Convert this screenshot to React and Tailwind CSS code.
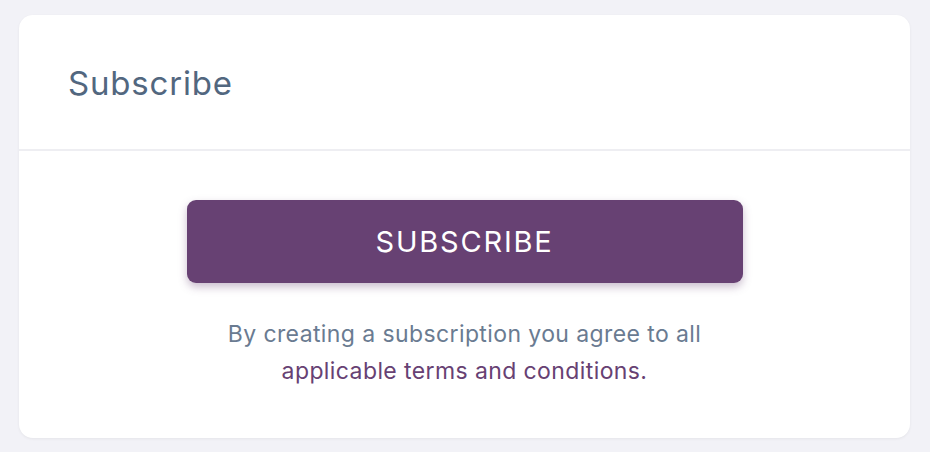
export default function App() {
  return (
    <div className="min-h-[452px] w-[930px] bg-[#f2f2f7] pt-[15px] pl-[19px]" style={{ fontFamily: 'Inter, "Noto Sans", sans-serif' }}>
      <div className="w-[891px] h-[423px] bg-white rounded-[14px] shadow-[0_1px_3px_rgba(0,0,0,0.06)] flex flex-col">
        <div className="h-[136px] flex items-center pl-[49px] border-b-2 border-[#eeeef2] shrink-0">
          <h1 className="text-[33px] tracking-[0.8px] text-[#52677f] leading-none pt-[2px]">Subscribe</h1>
        </div>
        <div className="flex flex-col items-center pt-[49px]">
          <button className="w-[556px] h-[83px] rounded-[9px] bg-[#674173] text-white text-[29px] tracking-[1.8px] shadow-[0_4px_8px_rgba(103,65,115,0.35)]">SUBSCRIBE</button>
          <p className="mt-[33px] text-center text-[23px] tracking-[0.4px] leading-[37px] text-[#6a7b91]">
            By creating a subscription you agree to all
            <br />
            <span className="text-[#674173]">applicable terms and conditions.</span>
          </p>
        </div>
      </div>
    </div>
  );
}
